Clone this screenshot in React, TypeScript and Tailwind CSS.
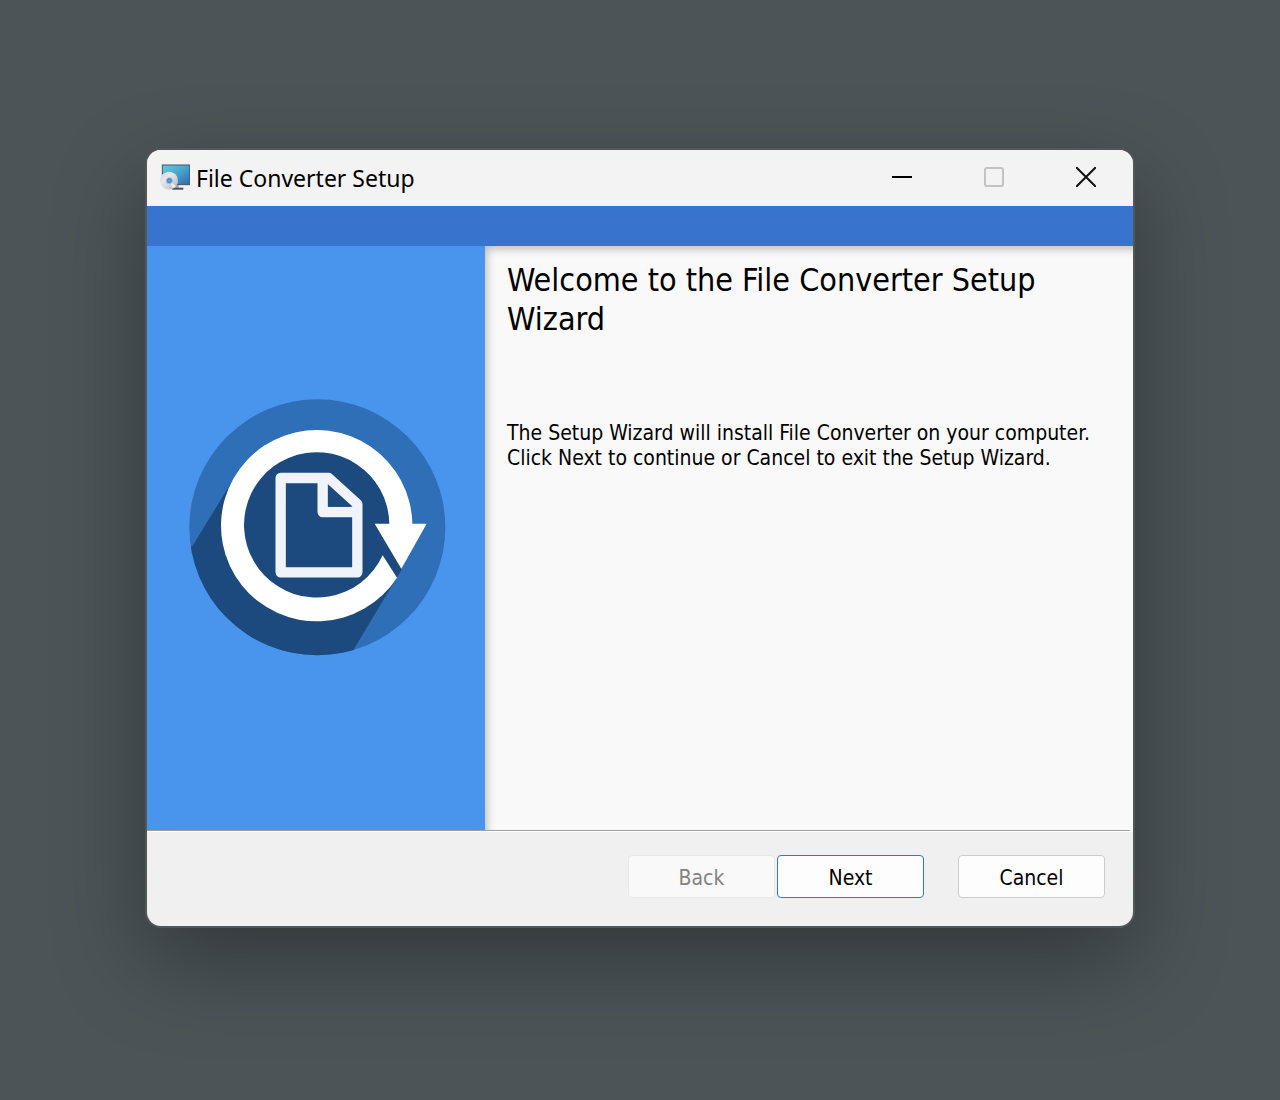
import React from "react";

function InstallerIcon() {
  return (
    <svg viewBox="0 0 90 81" className="mb-0.5 h-[27px] w-[30px] shrink-0" aria-hidden="true">
      <defs>
        <linearGradient id="screen" x1="0" y1="0" x2="1" y2="1">
          <stop offset="0" stopColor="#62cfd8" />
          <stop offset="0.5" stopColor="#4aa3cf" />
          <stop offset="1" stopColor="#2f66b0" />
        </linearGradient>
        <linearGradient id="disc" x1="0" y1="0" x2="1" y2="1">
          <stop offset="0" stopColor="#d0d2d5" />
          <stop offset="0.35" stopColor="#e6e7e9" />
          <stop offset="0.6" stopColor="#d5d7da" />
          <stop offset="1" stopColor="#aeb1b5" />
        </linearGradient>
      </defs>
      <rect x="46" y="62" width="10" height="12" fill="#a3a9af" />
      <rect x="36" y="71" width="34" height="6" fill="#4b5055" />
      <rect x="7" y="3" width="82" height="59" fill="url(#screen)" stroke="#41576a" strokeWidth="3" />
      <circle cx="27" cy="50" r="27" fill="url(#disc)" />
      <path d="M28 50L38 72A27 27 0 0 0 47 66Z" fill="#eceded" />
      <circle cx="28" cy="50" r="9" fill="#4d87c9" stroke="#9fbfe3" strokeWidth="3" />
      <circle cx="28" cy="50" r="3" fill="#79a9dd" />
    </svg>
  );
}

function ConverterLogo() {
  return (
    <svg viewBox="30 31 768 768" className="size-64 shrink-0 overflow-visible" role="img" aria-label="File Converter">
      <defs>
        <clipPath id="badge">
          <circle cx="412" cy="413" r="384" />
        </clipPath>
      </defs>
      <circle cx="412" cy="413" r="384" fill="#2f6fb7" />
      <path
        clipPath="url(#badge)"
        fill="#1c4a7e"
        d="M37 470L150 285L412 150L640 290L665 540L650 564L519 783L480 830H0V470Z"
      />
      <path
        d="M697 402A287 287 0 1 0 651 564L608 497A218 218 0 1 1 628 402H584L664 537L740 402Z"
        fill="#ffffff"
      />
      <path
        d="M302 265H446L532 343V548H302ZM428 265V367H532"
        fill="none"
        stroke="#f0f3fa"
        strokeWidth="31"
        strokeLinejoin="round"
      />
      <path d="M428 265H452L532 336V356Z" fill="#f0f3fa" />
      <path d="M445 290V351H513Z" fill="#1c4a7e" />
    </svg>
  );
}

const captionButton = "flex h-14 w-[92px] items-center justify-center pr-0.5 pb-0.5";
const dialogButton = "h-[43px] w-[147px] rounded-[4px] border pt-0.5 text-[21px] leading-6";

export default function App() {
  return (
    <div className="min-h-screen bg-[#4c5457] px-[147px] pt-[150px] pb-[174px] font-['DejaVu_Sans_Condensed','Noto_Sans',sans-serif] text-black">
      <main className="overflow-hidden rounded-[14px] bg-[#f0f0f0] shadow-[0_0_0_2px_#535759,0_34px_90px_rgba(0,0,0,0.34)]">
        <header className="flex h-14 items-center bg-[#f3f3f3] pl-[13px]">
          <InstallerIcon />
          <span className="ml-1.5 grow font-['Noto_Sans',sans-serif] text-[23px] leading-8">
            File Converter Setup
          </span>
          <button type="button" aria-label="Minimize" className={captionButton}>
            <svg viewBox="0 0 20 20" className="size-5" aria-hidden="true">
              <path d="M0 10H20" stroke="#000" strokeWidth="2" />
            </svg>
          </button>
          <button type="button" aria-label="Maximize" disabled className={captionButton}>
            <svg viewBox="0 0 20 20" className="size-5" aria-hidden="true">
              <rect x="1" y="1" width="18" height="18" rx="2" fill="none" stroke="#c3c3c3" strokeWidth="2" />
            </svg>
          </button>
          <button type="button" aria-label="Close" className={captionButton}>
            <svg viewBox="0 0 20 20" className="size-5" aria-hidden="true">
              <path d="M0 0L20 20M20 0L0 20" stroke="#111" strokeWidth="2" />
            </svg>
          </button>
        </header>
        <div className="h-10 bg-[#3874cd]" />
        <div className="flex min-h-[584px]">
          <div className="flex w-[338px] shrink-0 items-start justify-center bg-[#4995ed] pt-[154px] pl-[4px]">
            <ConverterLogo />
          </div>
          <section className="grow bg-[#f9f9f9] px-[22px] pt-[15px] shadow-[inset_6px_7px_9px_-4px_rgba(0,0,0,0.25)]">
            <h1 className="text-[32px] leading-[39px]">
              Welcome to the File Converter Setup Wizard
            </h1>
            <p className="mt-[82px] text-[21px] leading-[25px]">
              The Setup Wizard will install File Converter on your computer. Click Next to continue or
              Cancel to exit the Setup Wizard.
            </p>
          </section>
        </div>
        <hr className="mr-[3px] border-t border-[#a0a0a0]" />
        <footer className="flex items-center justify-end border-t border-white pt-[23px] pr-7 pb-7">
          <button type="button" disabled className={dialogButton + " border-[#e8e8e8] bg-[#f9f9f9] text-[#838383]"}>
            Back
          </button>
          <button type="button" className={dialogButton + " ml-[2px] border-[#2f78c4] bg-[#fdfdfd]"}>
            Next
          </button>
          <button type="button" className={dialogButton + " ml-[34px] border-[#cccccc] bg-[#fdfdfd]"}>
            Cancel
          </button>
        </footer>
      </main>
    </div>
  );
}
